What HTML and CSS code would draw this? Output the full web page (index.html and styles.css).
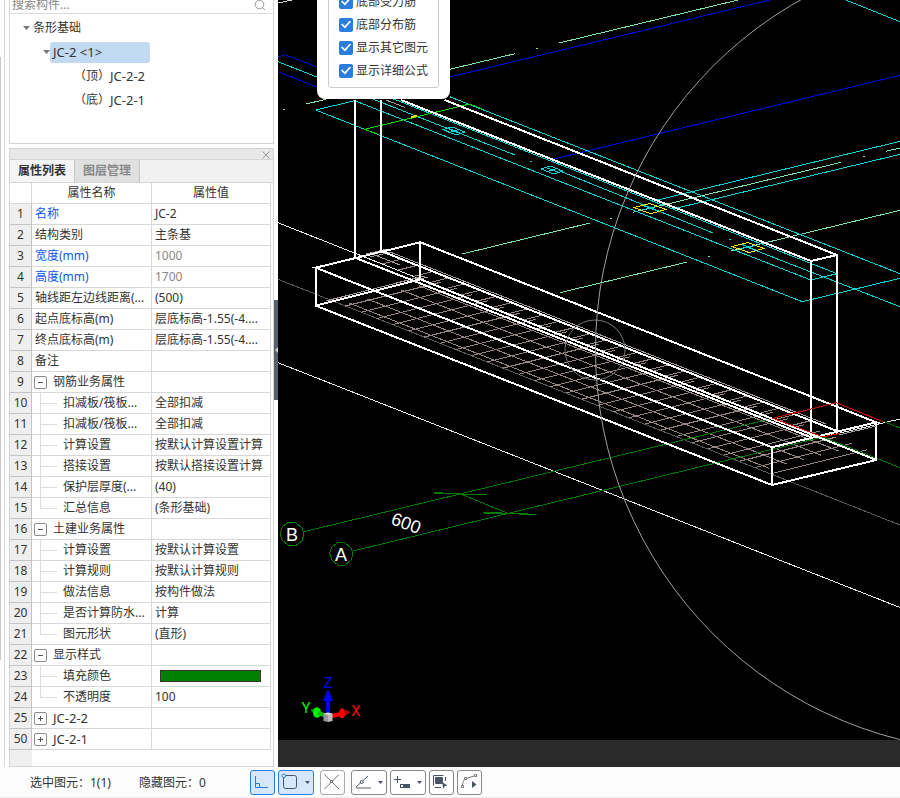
FILE: index.html
```html
<!DOCTYPE html>
<html lang="zh-CN">
<head>
<meta charset="utf-8">
<title>条形基础</title>
<link rel="stylesheet" href="styles.css">
</head>
<body>
<div class="app">
  <main class="work">
    <aside class="side">
      <div class="rail"><span class="rail-thumb"></span></div>
      <div class="panels">
        <section class="panel tree-panel">
          <label class="search">
            <input type="text" placeholder="搜索构件..." aria-label="搜索构件">
            <svg width="12" height="12" viewBox="0 0 12 12" fill="none" stroke="#999"><circle cx="5.500" cy="5.500" r="4.300"/><path d="M8.500 8.500L11 11"/></svg>
          </label>
          <ul class="tree">
            <li class="lv1"><i class="twist"></i><span>条形基础</span></li>
            <li class="lv2"><i class="twist"></i><span class="picked latin">JC-2 &lt;1&gt;</span></li>
            <li class="lv3"><span>（顶）</span><span class="latin">JC-2-2</span></li>
            <li class="lv3"><span>（底）</span><span class="latin">JC-2-1</span></li>
          </ul>
        </section>
        <section class="panel props">
          <div class="caption"><button class="close" aria-label="关闭"><svg width="8" height="8" viewBox="0 0 8 8" stroke="#999" fill="none"><path d="M.5 .5L7.500 7.500M7.500 .5L.5 7.500"/></svg></button></div>
          <div class="tabs"><button class="tab on">属性列表</button><button class="tab">图层管理</button></div>
          <div class="sheet">
            <table>
              <colgroup><col class="c-no"><col class="c-name"><col class="c-val"></colgroup>
              <thead><tr><th></th><th>属性名称</th><th>属性值</th></tr></thead>
              <tbody>
                <tr><th>1</th><td class="link">名称</td><td>JC-2</td></tr>
                <tr><th>2</th><td>结构类别</td><td>主条基</td></tr>
                <tr><th>3</th><td class="link">宽度(mm)</td><td class="dim">1000</td></tr>
                <tr><th>4</th><td class="link">高度(mm)</td><td class="dim">1700</td></tr>
                <tr><th>5</th><td>轴线距左边线距离(...</td><td>(500)</td></tr>
                <tr><th>6</th><td>起点底标高(m)</td><td>层底标高-1.55(-4....</td></tr>
                <tr><th>7</th><td>终点底标高(m)</td><td>层底标高-1.55(-4....</td></tr>
                <tr><th>8</th><td>备注</td><td></td></tr>
                <tr><th>9</th><td><div class="node"><button class="fold minus" aria-label="折叠"></button>钢筋业务属性</div></td><td></td></tr>
                <tr><th>10</th><td><div class="leaf">扣减板/筏板...</div></td><td>全部扣减</td></tr>
                <tr><th>11</th><td><div class="leaf">扣减板/筏板...</div></td><td>全部扣减</td></tr>
                <tr><th>12</th><td><div class="leaf">计算设置</div></td><td>按默认计算设置计算</td></tr>
                <tr><th>13</th><td><div class="leaf">搭接设置</div></td><td>按默认搭接设置计算</td></tr>
                <tr><th>14</th><td><div class="leaf">保护层厚度(...</div></td><td>(40)</td></tr>
                <tr><th>15</th><td><div class="leaf last">汇总信息</div></td><td>(条形基础)</td></tr>
                <tr><th>16</th><td><div class="node"><button class="fold minus" aria-label="折叠"></button>土建业务属性</div></td><td></td></tr>
                <tr><th>17</th><td><div class="leaf">计算设置</div></td><td>按默认计算设置</td></tr>
                <tr><th>18</th><td><div class="leaf">计算规则</div></td><td>按默认计算规则</td></tr>
                <tr><th>19</th><td><div class="leaf">做法信息</div></td><td>按构件做法</td></tr>
                <tr><th>20</th><td><div class="leaf">是否计算防水...</div></td><td>计算</td></tr>
                <tr><th>21</th><td><div class="leaf last">图元形状</div></td><td>(直形)</td></tr>
                <tr><th>22</th><td><div class="node"><button class="fold minus" aria-label="折叠"></button>显示样式</div></td><td></td></tr>
                <tr><th>23</th><td><div class="leaf">填充颜色</div></td><td><div class="swatch"></div></td></tr>
                <tr><th>24</th><td><div class="leaf last">不透明度</div></td><td>100</td></tr>
                <tr><th>25</th><td><div class="node latin"><button class="fold plus" aria-label="展开"></button>JC-2-2</div></td><td></td></tr>
                <tr><th>50</th><td><div class="node latin"><button class="fold plus" aria-label="展开"></button>JC-2-1</div></td><td></td></tr>
              </tbody>
            </table>
          </div>
        </section>
      </div>
      <div class="splitter"><i></i></div>
    </aside>
    <section class="view">
      <svg class="scene" viewBox="278 0 622 740" preserveAspectRatio="xMinYMin slice" fill="none" stroke-width="1">
        <g shape-rendering="crispEdges">
          <!-- blue axes -->
          <path stroke="#0000e6" d="M278 57L285 54.700L317 67M278 71.700L317 87M449.700 77L769.700 0M554 159L900 75.300"/>
          <!-- pale green centre lines -->
          <path stroke="#7fe5b0" d="M449.700 69.300L515 53.700M536 48.500h2M559 43L738 0M306 104L326 99.300M283 109.300h2M462 254L590 223M610 218h2M633 212.300L841.300 162.300M863 156.300h2M885.700 151.300L900 148M560 292.700L687.300 262M708 256.500h2M731 251L900 210.300"/>
          <path stroke="#cfd8d2" d="M278 3L292 0"/>
          <!-- cyan beams -->
          <path stroke="#00d5d5" d="M278 61.700L515 155M530 161.700h2M559 170.700L713 233M729 239.700h2M746 246.700L900 306.700M449.700 96.700L900 273.700M354.700 100.700L315.700 110L802.300 301.700L900 278.300M354.700 100.700L810.700 280L837 273.700L391 98M845.700 0L900 21.700M656.300 200.300L900 141.300M673 209L900 154.300"/>
          <path stroke="#00d5d5" d="M443 129.500L452 127L465 132L456 135ZM449 128.500L460 133M448 133L460 129M541 169L550 166L563 171L554 174ZM547 168L558 172M546 172L558 168M642 210L658 206M643 205.500L660 212M740 249L757 245M741 244L758 251"/>
          <path stroke="#f0e800" d="M634 207.500L649.700 203.500L666 209.500L650.500 213.700ZM732 246.500L748 242.500L764 248.500L749 252.500Z"/>
          <path stroke="#00e000" d="M378 134.300L364.700 129.300L469.700 104L483 109.300"/>
          <path stroke="#f0e800" stroke-width="2" d="M411 117L417 116"/>
          <!-- ground lines -->
          <path stroke="#e8e8e8" d="M278 222.700L420 279M278 362.700L900 607.500M823 437L900 419"/>
          <path stroke="#5a5a5a" d="M278 279.300L900 525"/>
          <!-- bottom reinforcement mesh -->
          <path stroke="#948783" d="M328.900 300l96-24m-80.200 30.200l96-24m-80.200 30.200l96-24m-80.200 30.200l96-24m-80.200 30.200l96-24m-80.200 30.200l96-24m-80.200 30.200l96-24m-80.200 30.200l96-24m-80.200 30.200l96-24m-80.200 30.200l96-24m-80.200 30.200l96-24m-80.200 30.200l96-24m-80.200 30.200l96-24m-80.200 30.200l96-24m-80.200 30.200l96-24m-80.200 30.200l96-24m-80.200 30.200l96-24m-80.200 30.200l96-24m-80.200 30.200l96-24m-80.200 30.200l96-24m-80.200 30.200l96-24m-80.200 30.200l96-24m-80.200 30.200l96-24m-80.200 30.200l96-24m-80.200 30.200l96-24m-80.200 30.200l96-24m-80.200 30.200l96-24m-80.200 30.200l96-24m-80.200 30.200l96-24"/>
          <path stroke="#948783" d="M349 303l420 165.300m-402.500-169.600l420 165.300m-402.500-169.600l420 165.300m-402.500-169.600l420 165.300m-402.500-169.600l420 165.300"/>
          <path stroke="#948783" d="M382 264l20-5m-4.200 11.200l20-5m-4.200 11.200l20-5m-4.200 11.200l20-5m-4.200 11.200l20-5m-4.200 11.200l20-5m-4.200 11.200l20-5m-4.200 11.200l20-5m-4.200 11.200l20-5m-4.200 11.200l20-5m-4.200 11.200l20-5m-4.200 11.200l20-5m-4.200 11.200l20-5m-4.200 11.200l20-5m-4.200 11.200l20-5m-4.200 11.200l20-5m-4.200 11.200l20-5m-4.200 11.200l20-5m-4.200 11.200l20-5m-4.200 11.200l20-5m-4.200 11.200l20-5m-4.200 11.200l20-5m-4.200 11.200l20-5m-4.200 11.200l20-5m-4.200 11.200l20-5m-4.200 11.200l20-5m-4.200 11.200l20-5"/>
          <path stroke="#a79b97" d="M366 254l22-5M370 257l22-5M390 252L826 424M372 254L400 265M326 301L424 276M332 301L428 277"/>
          <!-- grid axes and dimension -->
          <path stroke="#007a00" d="M304 531.700L773 418.300M353 551L823 437M884 421.700L900 428M823 437L900 467.700M434 493L486.700 495M483 512.300L535.700 514.300M434 492.500L461 494M486 494.500L461 494M483 513L508 513.300L535 515M460.700 494L508 513.300"/>
          <path stroke="#007a00" d="M304 534L302 541L295 546L288 545L282 540L280 533L283 526L289 522L296 523L302 528ZM353 554L351 560L345 565L338 565L332 560L329.500 553L332 547L338 542.500L345 543L351 548Z"/>
          <!-- foundation and wall solids -->
          <path stroke="#fff" stroke-width="2" d="M315.700 267.700L420.300 242.300L876.300 422.300L772 447.300ZV305.700L420.300 279.300V242.300M315.700 305.700L772 485V447.300M772 485L876.300 460V422.300M420.300 279.300L876.300 460"/>
          <path stroke="#fff" stroke-width="2" d="M355 100V257.700L811 437.300V261L401 100M381 100V251L837 431V255L444.700 100M811 261L837 255"/>
          <path stroke="#a0a0a0" d="M386 100L405 107.500M839 435L876 426"/>
          <path stroke="#e00000" d="M883 421.700L836.300 402.700L773 418.300L823 437L840 433.300"/>
        </g>
        <!-- orbit guide -->
        <circle cx="595" cy="350" r="30" stroke="#777"/>
        <circle cx="997" cy="350" r="401.500" stroke="#a0a0a0"/>
        <g class="marks" text-anchor="middle">
          <text x="292" y="541">B</text>
          <text x="341" y="561">A</text>
          <text transform="translate(404 529) rotate(20)">600</text>
        </g>
        <!-- axis triad -->
        <path fill="#0000ff" d="M328 689L333 701H330V714H326V701H323Z"/>
        <path fill="#008a00" d="M310 710L318 707V717Z"/>
        <ellipse cx="317" cy="712.500" rx="4" ry="5.300" fill="#00f000"/>
        <path stroke="#00c000" stroke-width="4" d="M318 713L324 715"/>
        <path stroke="#f00" stroke-width="4" d="M332 716L341 714"/>
        <path fill="#a00000" d="M341 708L351 712L342 718Z"/>
        <ellipse cx="342" cy="713.500" rx="3" ry="5" fill="#f00"/>
        <path fill="#999" d="M323.500 713.500H328V722L323.500 721Z"/><path fill="#bbb" d="M328 713.500H332.500V721L328 722Z"/><path fill="#ddd" d="M323.500 713.500L328 712.500L332.500 713.500L328 715Z"/>
        <g class="axes" text-anchor="middle">
          <text x="328" y="688" fill="#0000ff">Z</text>
          <text x="306" y="713" fill="#00f000">Y</text>
          <text x="356" y="716" fill="#ff0000">X</text>
        </g>
      </svg>
      <div class="view-foot"></div>
      <div class="popup">
        <div class="options">
          <label><input type="checkbox" checked>底部受力筋</label>
          <label><input type="checkbox" checked>底部分布筋</label>
          <label><input type="checkbox" checked>显示其它图元</label>
          <label><input type="checkbox" checked>显示详细公式</label>
        </div>
      </div>
    </section>
  </main>
  <footer class="status">
    <div class="counts"><span>选中图元：1(1)</span><span>隐藏图元：0</span></div>
    <div class="tools">
      <button class="tool on" aria-label="正交"><svg width="23" height="23" viewBox="1 1 23 23" fill="none" stroke="#2b7de0"><path d="M5.500 6V17.500H18M5.500 13.500H9.500V17.500"/></svg></button>
      <button class="tool wide on" aria-label="捕捉"><svg width="34" height="23" viewBox="1 1 34 23" fill="none" stroke="#4a5468"><rect x="5.500" y="5.500" width="13" height="13" rx="2"/><circle cx="5.800" cy="5.800" r="1.800" fill="#d6e6fb" stroke="#2b7de0"/><path d="M27 11H32L29.500 14Z" fill="#4a5468" stroke="none"/></svg></button>
      <button class="tool apart faint" aria-label="交点"><svg width="23" height="23" viewBox="1 1 23 23" fill="none" stroke="#777"><path d="M4.500 4.500L19 19M19 4.500L4.500 19"/><rect x="10.500" y="10.500" width="2" height="2" fill="#fff"/></svg></button>
      <button class="tool wide apart" aria-label="角度"><svg width="34" height="23" viewBox="1 1 34 23" fill="none" stroke="#4a5468"><path d="M5 17L17 6"/><path stroke="#b0b0b0" stroke-width="2" d="M5 18H20"/><circle cx="10.700" cy="12" r="1.500" fill="#fff"/><path d="M27 11H32L29.500 14Z" fill="#4a5468" stroke="none"/></svg></button>
      <button class="tool wide" aria-label="偏移"><svg width="34" height="23" viewBox="1 1 34 23" fill="none" stroke="#4a5468"><path d="M4 9.500H11M7.500 6V13"/><path fill="#4a5468" stroke="none" d="M10 14H20V18H10Z"/><path fill="#fff" stroke="none" d="M11 15h2v2h-2z"/><path d="M27 11H32L29.500 14Z" fill="#4a5468" stroke="none"/></svg></button>
      <button class="tool" aria-label="选择"><svg width="23" height="23" viewBox="1 1 23 23" fill="none" stroke="#4a5468"><path d="M4.500 15.500V5.500H14.500M16.500 7V11M6 17.500H12"/><path d="M6.500 7.500H13.500V13.500H6.500Z" fill="#4a5468"/><path fill="#4a5468" stroke="none" d="M13 12L18.500 15.500L15.700 16.200L14.500 19Z"/></svg></button>
      <button class="tool" aria-label="折线"><svg width="23" height="23" viewBox="1 1 23 23" fill="none" stroke="#777"><path d="M5.500 15.500C6 11 7 9 9 8.500L17 6"/><path fill="#fff" d="M4.500 15.500h2v2h-2zM7.500 7.500h2v2h-2zM17.500 4.500h2v2h-2z"/><path fill="#4a5468" stroke="none" d="M15 11L19.500 14.500L15 18Z"/></svg></button>
    </div>
  </footer>
</div>
</body>
</html>
```
FILE: styles.css
```css
* { box-sizing: border-box; }

body {
  margin: 0;
  overflow: hidden;
  color: #333;
  background: #fcfcfc;
  font: 12px/20px "Noto Sans", "Noto Sans CJK SC", sans-serif;
}

button, input { font: inherit; color: inherit; margin: 0; padding: 0; }

.app { display: flex; flex-direction: column; height: 100vh; }
.work { display: flex; flex: 1; min-height: 0; }

/* left column */
.side { display: flex; width: 278px; flex: none; background: #fff; }
.rail { display: flex; width: 5px; border-right: 1px solid #d8d8d8; padding: 57px 0 107px; }
.rail-thumb { width: 1px; background: #c8c8c8; }
.panels { display: flex; flex-direction: column; flex: 1; gap: 4px; margin-left: 4px; }
.panel { border: 1px solid #d4d4d4; background: #fff; }
.splitter { display: flex; align-items: center; justify-content: flex-end; align-self: center; width: 4px; height: 100px; margin-top: -67px; background: #59616e; }
.splitter i { width: 3px; height: 6px; background: #ccc; clip-path: polygon(100% 0, 100% 100%, 0 50%); }

.tree-panel { margin-top: -9px; flex: none; }
.search { display: flex; align-items: center; height: 22px; padding: 4px 7px 0 2px; border-bottom: 1px solid #dcdcdc; }
.search input { flex: 1; min-width: 0; height: 18px; border: 0; outline: 0; background: none; }
.search input::placeholder { color: #888; opacity: 1; }
.tree { list-style: none; margin: 0; padding: 2px 0 31px; }
.tree li { display: flex; align-items: center; height: 24px; }
.lv1 { padding-left: 13px; }
.lv2 { padding-left: 33px; }
.lv3 { padding-left: 64px; }
.twist { width: 7px; height: 4px; background: #777; clip-path: polygon(0 0, 100% 0, 50% 100%); }
.lv1 .twist { margin-right: 3px; }
.latin { font-size: 13px; }
.picked { width: 100px; height: 21px; padding-left: 3px; border-radius: 3px; background: #c1d9f1; }

.props { display: flex; flex-direction: column; flex: 1; min-height: 0; }
.caption { display: flex; justify-content: flex-end; height: 11px; padding: 2px 3px 0; background: #e8e8e8; border-bottom: 1px solid #d4d4d4; }
.close { display: flex; width: 8px; height: 8px; border: 0; background: none; }
.tabs { display: flex; height: 23px; background: #f1f1f1; border-bottom: 1px solid #d4d4d4; }
.tab { width: 65px; border: 0; border-right: 1px solid #c4c6cc; background: #e0e0e0; color: #888; font-weight: bold; }
.tab.on { background: #f4f4f6; color: #333; }

.sheet { flex: 1; min-height: 0; overflow: hidden; background: linear-gradient(to right, #efefef 22px, #fff 22px); }
table { width: 261px; table-layout: fixed; border-spacing: 0; background: #fff; }
.c-no { width: 22px; }
.c-name { width: 120px; }
th, td { height: 21px; padding: 0; overflow: hidden; white-space: nowrap; line-height: 20px; font-weight: normal; border-right: 1px solid #d8d8d8; border-bottom: 1px solid #d8d8d8; }
td { padding-left: 3px; }
tbody th { background: #efefef; border-color: #c4c4c4; }
.link { color: #1456f0; }
.dim { color: #888; }

.node { display: flex; align-items: center; gap: 6px; height: 20px; }
.fold { width: 13px; height: 13px; flex: none; margin-left: -1px; border: 1px solid #8c8c8c; border-radius: 2px; background: linear-gradient(#555, #555) center / 5px 1px no-repeat; }
.fold.plus { background: linear-gradient(#555, #555) center / 5px 1px no-repeat, linear-gradient(#555, #555) center / 1px 5px no-repeat; }
.leaf {
  height: 20px;
  margin-left: 5px;
  padding-left: 23px;
  background: linear-gradient(#ddd, #ddd) 0 10px / 17px 1px no-repeat, linear-gradient(#ddd, #ddd) 0 0 / 1px 100% no-repeat;
}
.leaf.last { background-size: 17px 1px, 1px 10px; }
.swatch { height: 12px; margin: 0 9px 0 5px; border: 1px solid #333; background: #008000; }

/* model view */
.view { position: relative; display: flex; flex-direction: column; flex: 1; min-width: 0; background: #000; }
.scene { flex: 1; min-height: 0; width: 100%; }
.view-foot { height: 27px; flex: none; background: #2a2a2a; }
.marks { fill: #fff; font: 18px/1 "Liberation Sans", sans-serif; }
.axes { font: 15px/1 "Roboto", sans-serif; }

.popup { position: absolute; left: 39px; top: -24px; padding: 11px; border-radius: 8px; background: #fff; }
.options { display: flex; flex-direction: column; width: 111px; padding: 2px 10px 5px; border: 1px solid #ccc; border-radius: 3px; }
.options label { display: flex; align-items: center; gap: 3px; height: 23px; white-space: nowrap; }
.options input { appearance: none; display: flex; flex: none; align-items: center; justify-content: center; width: 14px; height: 14px; border-radius: 2px; background: #2b7de0; }
.options input:checked::before { content: ""; width: 10px; height: 8px; background: #fff; clip-path: polygon(0 50%, 12% 36%, 38% 68%, 88% 0, 100% 12%, 40% 100%); }

/* status bar */
.status { display: flex; align-items: center; height: 31px; flex: none; border-bottom: 1px solid #eee; background: #fcfcfc; }
.counts { display: flex; width: 250px; padding: 2px 0 0 30px; gap: 28px; }
.tools { display: flex; gap: 3px; }
.tool { display: flex; width: 25px; height: 25px; border: 1px solid #888; border-radius: 3px; background: #fff; }
.tool.wide { width: 36px; }
.tool.apart { margin-left: 3px; }
.tool.on { border-color: #2b7de0; background: #d6e6fb; }
.tool.faint { border-color: #aaa; }
```
